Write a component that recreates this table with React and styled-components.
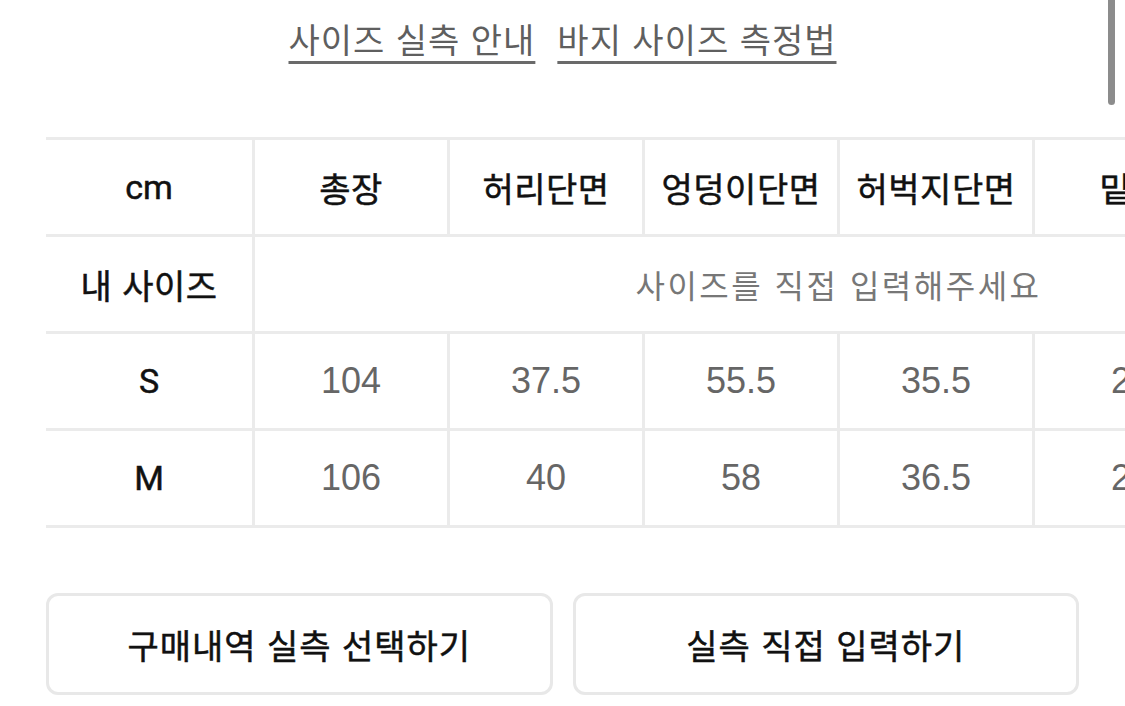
import React from 'react';
import styled, { createGlobalStyle } from 'styled-components';

const GlobalStyle = createGlobalStyle`
  html, body {
    margin: 0;
    padding: 0;
    background: #fff;
    overflow: hidden;
  }
  body {
    font-family: "Liberation Sans", "Noto Sans CJK KR", sans-serif;
  }
`;

const columns = ['총장', '허리단면', '엉덩이단면', '허벅지단면', '밑위', '밑단단면'];

const sizes = [
  { name: 'S', values: ['104', '37.5', '55.5', '35.5', '27', '20'] },
  { name: 'M', values: ['106', '40', '58', '36.5', '28', '21'] },
];

const Page = styled.div`
  position: relative;
  width: 1125px;
  height: 706px;
  overflow: hidden;
`;

// iOS style scroll indicator sitting over the page
const ScrollThumb = styled.div`
  position: absolute;
  top: -10px;
  right: 10px;
  width: 7px;
  height: 115px;
  border-radius: 4px;
  background: #8c8c8c;
`;

const GuideBar = styled.nav`
  display: flex;
  justify-content: center;
  gap: 22px;
  height: 137px;
  padding-top: 19px;
  box-sizing: border-box;
`;

const GuideLink = styled.a`
  font-family: "Liberation Sans", "Noto Sans CJK KR", sans-serif;
  font-size: 34px;
  letter-spacing: 1px;
  line-height: 44px;
  height: 44px;
  color: #5f5f5f;
  text-decoration: underline;
  text-decoration-thickness: 3px;
  text-underline-offset: 8px;
  text-decoration-color: #6a6a6a;
  cursor: pointer;
`;

const TableScroll = styled.div`
  margin-left: 46px;
  overflow: hidden;
`;

const Table = styled.div`
  display: grid;
  grid-template-columns: 209px repeat(6, 195px);
  grid-auto-rows: 97px;
  width: max-content;
  border-top: 3px solid #ebebeb;
`;

const Cell = styled.div`
  box-sizing: border-box;
  display: flex;
  align-items: center;
  justify-content: center;
  border-right: 3px solid #ebebeb;
  border-bottom: 3px solid #ebebeb;
  white-space: nowrap;
  grid-column: ${({ $span }) => ($span ? `span ${$span}` : 'auto')};
  font-family: ${({ $latin }) => ($latin ? 'Roboto, "Noto Sans CJK KR", sans-serif' : '"Liberation Sans", "Noto Sans CJK KR", sans-serif')};
  font-size: ${({ $value }) => ($value ? '36px' : '34px')};
  font-weight: 400;
  letter-spacing: ${({ $value, $latin }) => ($value || $latin ? '0' : '0.5px')};
  color: ${({ $value }) => ($value ? '#666' : '#111')};
  -webkit-text-stroke: ${({ $value }) => ($value ? '0' : '0.5px #111')};
`;

const Placeholder = styled(Cell)`
  font-size: 32px;
  letter-spacing: 2.5px;
  color: #777;
  -webkit-text-stroke: 0;
`;

const ButtonRow = styled.div`
  display: grid;
  grid-template-columns: 1fr 1fr;
  gap: 20px;
  margin: 65px 46px 0 46px;
`;

const ActionButton = styled.button`
  height: 102px;
  box-sizing: border-box;
  background: #fff;
  border: 3px solid #e8e8e8;
  border-radius: 12px;
  font-family: "Liberation Sans", "Noto Sans CJK KR", sans-serif;
  font-size: 34px;
  letter-spacing: 1px;
  font-weight: 400;
  color: #111;
  -webkit-text-stroke: 0.5px #111;
  cursor: pointer;
`;

const App = () => (
  <Page>
    <GlobalStyle />
    <ScrollThumb />
    <GuideBar>
      <GuideLink>사이즈 실측 안내</GuideLink>
      <GuideLink>바지 사이즈 측정법</GuideLink>
    </GuideBar>
    <TableScroll>
      <Table>
        <Cell $latin>cm</Cell>
        {columns.map((c) => <Cell key={c}>{c}</Cell>)}
        <Cell>내 사이즈</Cell>
        <Placeholder $span={6}>사이즈를 직접 입력해주세요</Placeholder>
        {sizes.map((s) => (
          <React.Fragment key={s.name}>
            <Cell $latin>{s.name}</Cell>
            {s.values.map((v, i) => <Cell $value key={columns[i]}>{v}</Cell>)}
          </React.Fragment>
        ))}
      </Table>
    </TableScroll>
    <ButtonRow>
      <ActionButton>구매내역 실측 선택하기</ActionButton>
      <ActionButton>실측 직접 입력하기</ActionButton>
    </ButtonRow>
  </Page>
);

export default App;
